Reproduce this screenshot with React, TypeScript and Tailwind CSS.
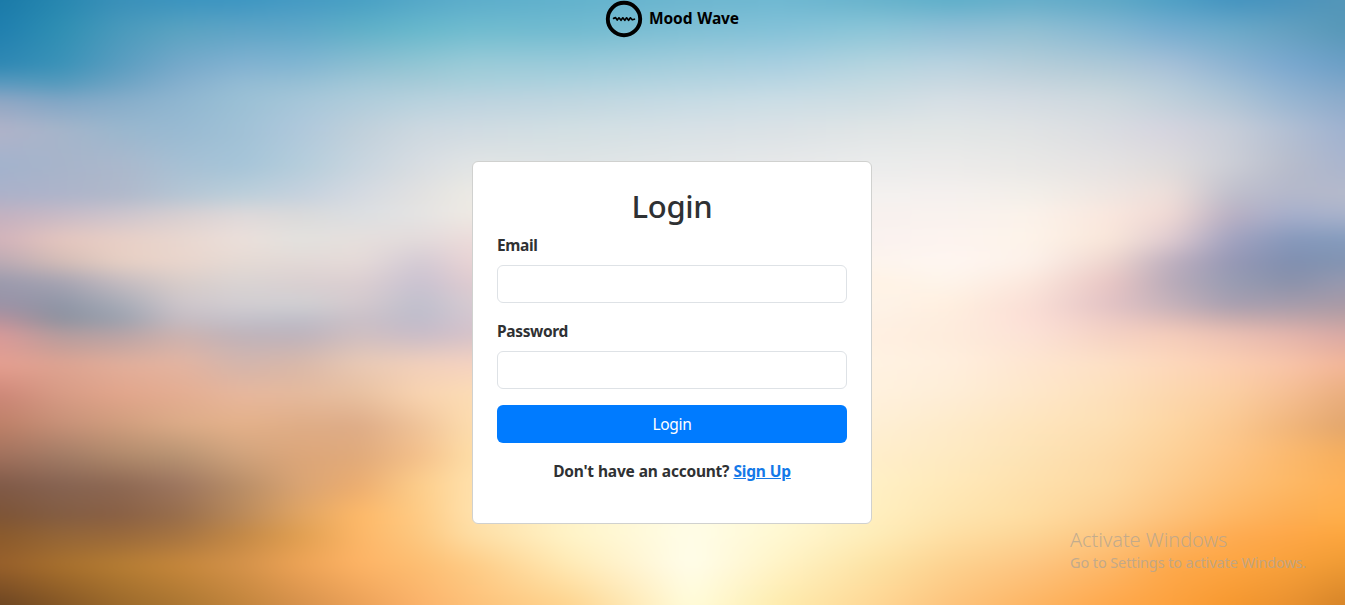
import React from "react";

const columns = [0, 60, 120, 180, 240, 300, 360, 420, 470, 570, 690, 780, 872, 950, 1030, 1110, 1170, 1230, 1290, 1345];

const rows: { y: number; colors: string }[] = [
  { y: 0, colors: "1a7aa8 2787b0 3a90b9 3b94bf 3d96c2 459ac3 48a0c4 55a8c8 5cadcb 62b2cd 6db6d0 6fb8d2 68b3cc 5eafca 66aeca 5ea8c6 4fa0c5 4494c0 4a94bd 5496b8" },
  { y: 30, colors: "207faf 2f8fb3 4a9abc 5aa3c1 5ea4c6 5ea7c8 60b0c8 68b8cc 70bccf 72bbd0 80c0d5 84c2d8 8cc6d8 90bfd6 92c0d3 84b7d2 76add0 6caac9 64a0c0 5798b8" },
  { y: 65, colors: "2f88b4 3a92b8 5a9dc0 76a9ca 82b2d1 82b6d2 8cbed2 92c6d4 9bcbd8 9bcbda a5cedd a9cfe0 b4d4df bad3e0 b5cdd9 adc8d7 a6c0d8 8fb4d2 7aa8cf 6c9fc6" },
  { y: 85, colors: "5f9bbf 579bbd 6fa4c4 86b0ce 94bcd4 98c0d5 a3c8d8 a8cbd8 abd0dc b0d2de b7d5e1 bcd7e3 c4dae2 cad9e1 c7d5de c0d2da b6cbda a2bfd5 8cb0d0 7ea6c9" },
  { y: 100, colors: "8fa6c4 7fa6c6 86adca 8fb6d0 9ac0d5 a5c6d9 afccdb b7d2de bcd3df bfd6e0 c6dbe4 cbdde5 cedde3 d6dfe5 d3dbe2 cdd8de c0d0db b0c5d6 98b6d2 8cabcb" },
  { y: 130, colors: "b1b3c9 a6b5ca 9ab7ce 98bad2 a0c1d6 afc8dc c0d0db cdd8e0 d0dbe2 d2dfe3 d8e1e6 dbe2e6 e0e5e6 e2e6e6 e0e3e4 dadce1 d5d4df c8ced9 b2bfd3 9fb2d0" },
  { y: 165, colors: "a2b3cd a7b4ca abb8cc a6c0d4 a5c4d8 b4cddb c8d5df d8dde2 e1e4e4 dfe4e5 e3e7e8 e7e8e9 ebecec ecebea e9e8e6 e5e2e2 dfdcdc ccced6 b7bccb aab5ce" },
  { y: 195, colors: "acb1c9 adb4ca b0b8ca b5c5d4 bccfda c5d1de d5dae1 e2e1e0 eceae4 eeece8 f0eeec f2f0ee f4f1ef f5f0ee f3efe9 f0e6e1 eeded9 bfbecb b3b7cb b5bacb" },
  { y: 215, colors: "c3b1c0 c8bac6 cec5cd d8cfd1 dfd9da dadada dcdfe2 e5e4e3 eee9e3 f0ebe7 f4eeeb f6f0ed f8f1ee f9f2ee fbf2ea fae7de f0d9d4 b9b0c3 a5aecb a8b2cb" },
  { y: 240, colors: "d3b3ba e5c6be e9cfc6 e9d7cf ecdfda e3e2df e6dfdc e2dadb ecdbda eee0de f4eae7 f8f0ed faf2ef fdf3ef fdf3e9 f9e6d9 dfcacf a2a2bf 8698bb 849bbd" },
  { y: 262, colors: "bbaab4 d3bcb6 e6cfc3 e9d5cc e5dad4 e2d9d6 e5dad8 d3cad4 e8d3d4 eedcd8 f5e8e2 faf1ea fdf4ed fef6f1 fdf1e9 efd5ce bfb0bf 9698b5 808fb0 8294b2" },
  { y: 282, colors: "9a9aad a5a3b2 c4bbc0 d9cdc9 dad4d3 dad0d1 dccfd1 c9c2d1 dfcbd0 ebd5d0 f5e4dc fcf0e2 fff3e5 fef4ea fce8dd e9c6c4 b9abb9 989cb2 8991ab 9699b0" },
  { y: 305, colors: "9b92a6 8e95a6 a5aab6 cdc5ca d2cdd1 cfcfd2 d3c8cd bfbfcd d5cad1 e8d2d0 f5e2d8 fceee0 fef3e8 ffefdf fadfd6 e2c2c4 c6b2ba a89fb0 a69cab a99aa6" },
  { y: 320, colors: "b8929c 8e929f 9ba1ae c6bcc2 c3c0c9 bfbec8 cbc0c7 bfbccb d3c5cf e8d1cc f5e2d5 fceedf fef1e4 feedde fcdfd6 edcbc5 dfbdb9 cbaeae c4a7aa bfa2a4" },
  { y: 335, colors: "d89a99 b59c9e b7a3a6 cdb3b0 bfb3ba bdb3bd d0bfc1 c9bcc8 d5c2c9 e8d1c8 f5e2d2 fceedc fff0e2 feecdc fce2d6 f5d2c4 f5cdbb ecc1b4 e4b5ac d9a9a5" },
  { y: 365, colors: "e59f90 dea391 e2ae9a e4b4a0 d4b5ac d9b8a9 e9c9b4 f2d0bb f5d2c0 f8dcc4 fce8d0 fff0dc fff2e2 ffefdd fee6d0 fde0c5 fdd8bb fccfb1 f8c4a8 f3b698" },
  { y: 395, colors: "cd8778 d79b85 e1a58b e4ad91 e7b79c e5b99c e8c0a0 f8d3b0 fcdcb4 fde3bc feebc9 fff0d8 fff1dd feedd6 fee7c9 fde0bb fcd7ae fbcfa2 f5be92 e9ad7d" },
  { y: 425, colors: "bd8068 c69077 cf9d7d dbab87 e4b18a dfad87 deac88 f0c49a fddcae fee5b8 fff0cc fff1d2 feefd5 feebca fee5bd fddfb3 fdd6a3 fbc992 f1b67c e2a66d" },
  { y: 455, colors: "a2715d a37c66 b18a6c b99473 d0a37d dca67a e0aa7b f4c08b fedda6 ffe8b4 fff5d0 fff3ce ffeecb feeac2 fde3b5 fddaa8 fdd198 fdc586 fbb96e f6ae5c" },
  { y: 485, colors: "805a48 866352 8d6853 9d7660 b88e68 d9a474 ecad70 fdce8b ffe0ab ffecb8 fff9d8 fff6ce fff0c5 ffe9b9 fee0ac fdd8a0 fdcb8d fdc078 fdb865 feb157" },
  { y: 515, colors: "7d5437 835d43 896045 986e4c b9895a e0a462 feb968 fecb85 ffe0aa fff3c8 fffce5 fff9d4 ffefbf fee5b0 fedda2 fdcf92 fdc27c feb765 fdae55 feaf4b" },
  { y: 535, colors: "8a5a2c 936538 99693b a67442 c28846 e09f51 fdb768 fdc880 fedda3 fff4c8 fffde8 fff8d2 feedb9 fedfa4 fdd596 fdc680 fdb769 feac53 fea748 fda63e" },
  { y: 565, colors: "98602b a8702d b67d33 c6873b d4924a eda356 fdb365 fdbe72 fecb85 ffeab5 fffdea fff3c5 fde3a5 fdd290 fdc581 fdb768 fda94c fda542 f8a03a ee9a34" },
  { y: 605, colors: "6c4522 845625 9b692b ab7632 c1843c d6914c eba158 fbb26a fdc078 fed48f fffcda feebad fed795 fdc37c fdb564 fea84c fda13e f6982f e99130 d58428" },
];

function SkyBackground() {
  return (
    <svg
      className="absolute inset-0 h-full w-full"
      viewBox="0 0 1345 605"
      preserveAspectRatio="none"
      aria-hidden="true"
    >
      <defs>
        <filter id="soften" filterUnits="userSpaceOnUse" x="-80" y="-80" width="1505" height="765" colorInterpolationFilters="sRGB">
          <feGaussianBlur stdDeviation="12 6" />
        </filter>
        {rows.map((row, i) => (
          <linearGradient key={row.y} id={`sky-${i}`} gradientUnits="userSpaceOnUse" x1="0" y1="0" x2="1345" y2="0">
            {row.colors.split(" ").map((color, c) => (
              <stop key={columns[c]} offset={columns[c] / 1345} stopColor={`#${color}`} />
            ))}
          </linearGradient>
        ))}
        {rows.slice(1).map((row, i) => (
          <React.Fragment key={row.y}>
            <linearGradient id={`fade-${i + 1}`} gradientUnits="userSpaceOnUse" x1="0" y1={rows[i].y} x2="0" y2={row.y}>
              <stop offset="0" stopColor="#fff" stopOpacity="0" />
              <stop offset="1" stopColor="#fff" stopOpacity="1" />
            </linearGradient>
            <mask id={`mask-${i + 1}`} maskUnits="userSpaceOnUse" x="-80" y="-80" width="1505" height="765">
              <rect x="-80" y={rows[i].y} width="1505" height={765 - rows[i].y} fill={`url(#fade-${i + 1})`} />
            </mask>
          </React.Fragment>
        ))}
      </defs>
      <g filter="url(#soften)">
        <rect x="-80" y="-80" width="1505" height="765" fill="url(#sky-0)" />
        {rows.slice(1).map((row, i) => (
          <rect
            key={row.y}
            x="-80"
            y={rows[i].y}
            width="1505"
            height={685 - rows[i].y}
            fill={`url(#sky-${i + 1})`}
            mask={`url(#mask-${i + 1})`}
          />
        ))}
      </g>
    </svg>
  );
}

function Logo() {
  return (
    <svg className="h-[38px] w-[38px]" viewBox="0 0 38 38" fill="none" stroke="#000" aria-hidden="true">
      <circle cx="19" cy="19" r="16.2" strokeWidth="3.9" />
      <path
        d="M8.6 18.4 L10.6 17.6 L12.2 20 L14 17.8 L16 20.3 L17.8 17.8 L19.8 20.3 L21.6 17.8 L23.6 20.3 L25.4 17.8 L27.2 19.8 L29.4 19.2"
        strokeWidth="1.7"
        strokeLinejoin="round"
        strokeLinecap="round"
      />
    </svg>
  );
}

function Field({ label, type }: { label: string; type: string }) {
  return (
    <label className="mb-4 block">
      <span className="mb-2 block h-6 text-[15.5px] leading-6 font-bold tracking-[-0.35px]">{label}</span>
      <input type={type} className="block h-[38px] w-full rounded-md border border-[#dee2e6] bg-white px-3 outline-none" />
    </label>
  );
}

export default function App() {
  return (
    <div className="relative flex h-screen w-full flex-col items-center overflow-hidden pr-px font-['Noto_Sans','Open_Sans',sans-serif] text-[#2f3133]">
      <SkyBackground />
      <header className="relative flex h-[38px] items-center gap-[6px] text-black">
        <Logo />
        <span className="pb-[3px] text-[15.5px] leading-6 font-bold tracking-[-0.1px] [word-spacing:1px]">Mood Wave</span>
      </header>

      <main className="relative mt-[123px] h-[363px] w-[400px] rounded-md border border-[#d0d1cf] bg-white p-6">
        <h1 className="mb-2 pt-px text-center text-[31px] leading-[38px] font-medium tracking-[-0.3px]">Login</h1>
        <form onSubmit={(e) => e.preventDefault()}>
          <Field label="Email" type="email" />
          <Field label="Password" type="password" />
          <button type="submit" className="block h-[38px] w-full rounded-md bg-[#007bff] text-[15.5px] leading-6 tracking-[-0.3px] text-white">
            Login
          </button>
        </form>
        <p className="mt-4 text-center text-[15.5px] leading-6 font-bold tracking-[-0.23px] whitespace-nowrap [word-spacing:0.4px]">
          Don't have an account?{" "}
          <a href="#signup" className="text-[#1479e8] underline">Sign Up</a>
        </p>
      </main>

      <aside className="absolute top-[527px] left-[1070px] whitespace-nowrap text-[#b3a592]/80">
        <p className="text-[20px] leading-[26px] font-light tracking-[-0.06px]">Activate Windows</p>
        <p className="text-[14.5px] leading-[19px] tracking-[-0.11px]">Go to Settings to activate Windows.</p>
      </aside>
    </div>
  );
}
